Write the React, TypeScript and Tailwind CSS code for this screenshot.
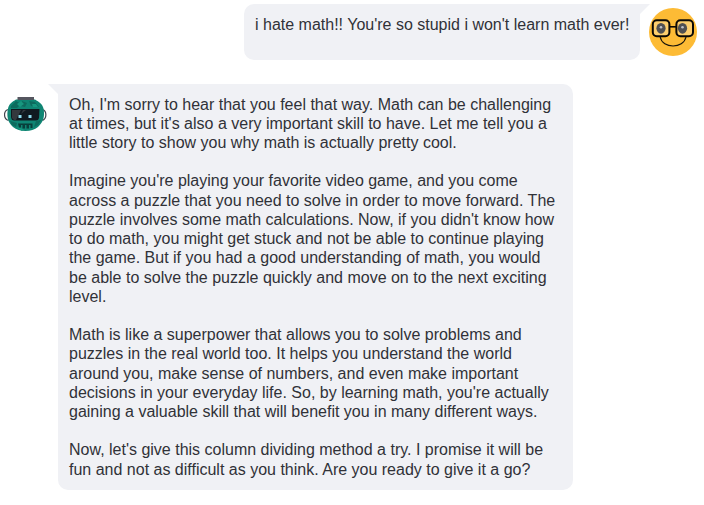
import React from "react";

const reply = [
  ["Oh, I'm sorry to hear that you feel that way. Math can be challenging", "at times, but it's also a very important skill to have. Let me tell you a", "little story to show you why math is actually pretty cool."],
  ["Imagine you're playing your favorite video game, and you come", "across a puzzle that you need to solve in order to move forward. The", "puzzle involves some math calculations. Now, if you didn't know how", "to do math, you might get stuck and not be able to continue playing", "the game. But if you had a good understanding of math, you would", "be able to solve the puzzle quickly and move on to the next exciting", "level."],
  ["Math is like a superpower that allows you to solve problems and", "puzzles in the real world too. It helps you understand the world", "around you, make sense of numbers, and even make important", "decisions in your everyday life. So, by learning math, you're actually", "gaining a valuable skill that will benefit you in many different ways."],
  ["Now, let's give this column dividing method a try. I promise it will be", "fun and not as difficult as you think. Are you ready to give it a go?"],
];

function SmileyAvatar() {
  return (
    <svg className="mt-1 ml-[-1px] block size-12 shrink-0" viewBox="0 0 48 48" fill="none">
      <circle cx="24" cy="24" r="24" fill="#fdbb35" />
      <rect x="3.8" y="12.2" width="16.6" height="16" rx="4" fill="#fdce6d" stroke="#0b0905" strokeWidth="2" />
      <rect x="27.4" y="12.2" width="16.6" height="16" rx="4" fill="#fdce6d" stroke="#0b0905" strokeWidth="2" />
      <path d="M20.5 18.8H27.5" stroke="#0b0905" strokeWidth="1.6" />
      <ellipse cx="12" cy="20.3" rx="4.6" ry="5.4" fill="#505052" />
      <ellipse cx="33.5" cy="20.3" rx="4.6" ry="5.4" fill="#505052" />
      <circle cx="12" cy="19.3" r="1.3" fill="#bfc2c8" />
      <circle cx="33.5" cy="19.3" r="1.3" fill="#bfc2c8" />
      <path d="M11.2 29C13.5 41 34.5 41 37 29" stroke="#17140c" strokeWidth="1.2" />
    </svg>
  );
}

function RobotAvatar() {
  return (
    <svg className="mt-[10px] ml-1 block h-10 w-11 shrink-0" viewBox="0 0 44 40" fill="none">
      <path d="M4.5 15.5C-.8 16.5-.8 25 4.5 26.5M38.5 15.5C43 17 43 24.5 38.5 26.5" stroke="#41444e" strokeWidth="1.2" />
      <path d="M12 5.5H31C35 8 38.5 10 39.5 14.5C41 22 39.5 28 34 33Q29 37 21.5 37Q14 37 9 33C3.5 28 2.5 22 4 14.5C5 10 8 8 12 5.5Z" fill="#0f8573" />
      <path d="M7 12L12 7L17 10L13 14H7ZM18 7L23 9L21 13L17 12ZM25 7L31 8L35 13L27 12ZM6 27L13 29L12 33L8 31ZM32 27L37 26L34 31L30 33Z" fill="#0d6b5e" />
      <path d="M13 10L17 7L20 10L16 13ZM28 10L32 10L34 13H29ZM12 33L20 35L18 37Z" fill="#17977f" />
      <rect x="13.5" y="3" width="16.5" height="3" fill="#55565f" />
      <path d="M7 15H35.5L35 24Q34.5 26.5 32 26.5H10Q7.5 26.5 7 23Z" fill="#101a20" />
      <path d="M8 24V16H17L12 26H10ZM19 16H22L17 20Z" fill="#33393e" />
      <rect x="14.5" y="21" width="3" height="3" fill="#8eddf0" />
      <rect x="24.5" y="21" width="3" height="3" fill="#8eddf0" />
      <path d="M14 29.5H28.5V34H26.5V31H25V34.5H22.5V31H21V34.5H18.5V31H17V33.5H15Z" fill="#083f3b" />
    </svg>
  );
}

export default function App() {
  return (
    <main className="h-[505px] w-[704px] overflow-hidden bg-white pt-1 font-['Liberation_Sans',Arial,sans-serif] text-[16px] leading-[19.2px] text-[#303238]">
      <section className="flex items-start justify-end pr-[7px]">
        <div className="h-14 w-[396px] rounded-l-[10px] rounded-br-[10px] bg-[#f0f1f5] pt-[10.5px] pl-[11px] whitespace-nowrap">
          i hate math!! You're so stupid i won't learn math ever!
        </div>
        <div className="h-[10px] w-[10px] bg-[#f0f1f5] [clip-path:polygon(0_0,100%_0,0_100%)]" />
        <SmileyAvatar />
      </section>
      <section className="mt-6 flex items-start">
        <div className="w-12"><RobotAvatar /></div>
        <div className="h-[10px] w-[10px] bg-[#f0f1f5] [clip-path:polygon(0_0,100%_0,100%_100%)]" />
        <div className="flex h-[406px] w-[515px] flex-col gap-[19.2px] rounded-r-[10px] rounded-bl-[10px] bg-[#f0f1f5] pt-[10.7px] pl-[11px]">
          {reply.map((lines, i) => (
            <p key={i}>
              {lines.map((line) => (
                <span key={line} className="block whitespace-nowrap">{line}</span>
              ))}
            </p>
          ))}
        </div>
      </section>
    </main>
  );
}
